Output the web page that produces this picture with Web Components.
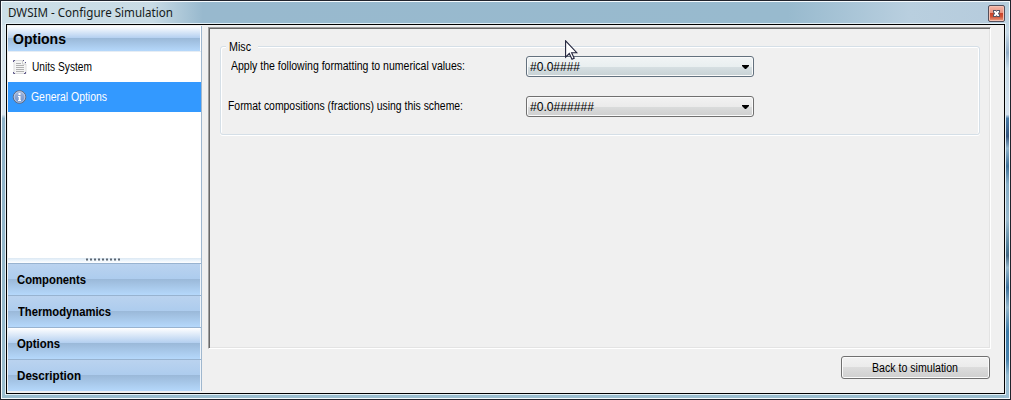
<!DOCTYPE html>
<html lang="en"><head><meta charset="utf-8"><title>DWSIM - Configure Simulation</title>
<style>html,body{margin:0;width:1011px;height:400px;overflow:hidden;font:12px "Liberation Sans",Arial,sans-serif;color:#000}</style></head>
<body><config-window></config-window>
<script>
function define(name, html, setup) {
  customElements.define(name, class extends HTMLElement {
    connectedCallback() {
      if (this.shadowRoot) return;
      const t = document.createElement('template');
      t.innerHTML = html;
      this.attachShadow({mode: 'open'}).append(t.content.cloneNode(true));
      if (setup) setup(this, this.shadowRoot);
    }
  });
}
/* Single-line label condensed or widened to a fixed measure. */
define('fit-label', `<style>:host{display:block;white-space:nowrap;flex:none;line-height:15px;height:15px}span{display:inline-block;transform-origin:0 50%}</style><span><slot></slot></span>`, (el, root) => {
  const s = root.querySelector('span'), w = +el.getAttribute('w');
  el.style.width = w + 'px';
  s.style.transform = `scaleX(${w / s.getBoundingClientRect().width})`;
});
define('close-button', `<style>:host{display:block;box-sizing:border-box;width:17px;height:17px;border:1px solid #534f5b;border-radius:2px;background:linear-gradient(#f4b7a9 0,#e99380 45%,#c9432a 48%,#cf5237 70%,#eba184 100%);box-shadow:inset 0 0 0 1px #f5c1b3}svg{display:block}</style>
<svg width="15" height="15" viewBox="0 0 15 15"><path d="M4 4h3l.5 1L8 4h3v2.3L10 7.5l1 1.2V11H8l-.5-1-.5 1H4V8.7l1-1.2-1-1.2z" fill="#535666"/><path d="M5 5h1.7l.8 1 .8-1H10v1L8.9 7.5 10 9v1H8.3l-.8-1-.8 1H5V9l1.1-1.5L5 6z" fill="#fff"/></svg>`);
define('side-item', `<style>:host{display:flex;height:30px;box-sizing:border-box;padding:0 0 0 4px;align-items:center;background:#fff}:host([selected]){background:#3399ff;color:#fff}slot[name=icon]{display:block;width:16px;height:16px;flex:none}.t{display:block;margin-left:4px}:host([selected]) .t{margin-left:3px}</style><slot name="icon"></slot><div class="t"><slot></slot></div>`);
define('nav-button', `<style>:host{display:flex;box-sizing:border-box;height:32px;border-top:1px solid #98b3d0;padding:2px 0 0 9px;align-items:center;font-weight:bold;background:linear-gradient(#bad3ef 0,#adccee 48%,#9ab8d8 48%,#b5d8fb 100%) 0 0/192px 100% no-repeat,#eef4fa}:host([active]){background:linear-gradient(#fff 0,#b3cff0 48%,#9ab8d8 48%,#b5d8fb 100%) 0 0/192px 100% no-repeat,#eef4fa}</style><slot></slot>`);
define('side-bar', `<style>
:host{display:flex;flex-direction:column;box-sizing:border-box;width:194px;height:365px;margin:1px 0 0 1px;border-right:1px solid #9fb7ce;background:#fff;flex:none}
header{height:25px;flex:none;display:flex;align-items:center;box-sizing:border-box;padding:0 0 1px 5px;font-size:15px;font-weight:bold;background:linear-gradient(#fff 0,#b3cff0 48%,#9ab8d8 48%,#b5d8fb 100%) 0 0/192px 100% no-repeat}
.list{flex:1;border-top:1px solid #e6edf4}.grip{height:5px;flex:none;background:linear-gradient(#dce8f2,#e8f2fb 40%,#fff);display:flex;justify-content:center;padding-right:3px}
svg{display:block}</style>
<header><fit-label w="53">Options</fit-label></header>
<div class="list">
<side-item><svg slot="icon" width="16" height="16" viewBox="0 0 16 16"><path d="M2 1.5h8.5L14 5v9.5H2z" fill="#f5f5f5" stroke="#ddd"/><path d="M10.5 1.5V5H14" fill="#fff" stroke="#ccc"/><path d="M4 4.5h5M4 6.5h8M4 8.5h8M4 10.5h8M4 12.5h8" stroke="#b1b1b1"/><path d="M1.5 3V1.5H3M11 1.5h1M13.5 3v1M1.5 13v1.5H3M12 14.5h1.5V13" fill="none" stroke="#5c5689"/></svg><fit-label w="60">Units System</fit-label></side-item>
<side-item selected><svg slot="icon" width="16" height="16" viewBox="0 0 16 16"><defs><linearGradient id="g" x2="0" y2="1"><stop stop-color="#a4b8dc"/><stop offset="1" stop-color="#6c8fca"/></linearGradient></defs><circle cx="7.5" cy="8" r="6.3" fill="url(#g)" stroke="#5f6b82"/><circle cx="7.5" cy="8" r="5.3" fill="none" stroke="#c1cee4" stroke-width=".8"/><path d="M6.5 4h2v2h-2zM6 7h2.5v4H9v1H6v-1h.7V8H6z" fill="#fff"/></svg><fit-label w="76">General Options</fit-label></side-item>
</div>
<div class="grip"><svg width="36" height="5"><path d="M1 1.5h35" stroke="#5f6873" stroke-width="2" stroke-dasharray="2 2"/><path d="M0 2.5h36" stroke="#fff" stroke-dasharray="1 3"/></svg></div>
<nav-button><fit-label w="69">Components</fit-label></nav-button>
<nav-button style="padding-left:10px"><fit-label w="93">Thermodynamics</fit-label></nav-button>
<nav-button active><fit-label w="43">Options</fit-label></nav-button>
<nav-button><fit-label w="64">Description</fit-label></nav-button>`);
define('combo-box', `<style>:host{display:flex;box-sizing:border-box;width:228px;height:21px;border:1px solid #707070;border-radius:3px;padding:1px 4px 0 3px;align-items:center;justify-content:space-between;background:linear-gradient(#f2f2f2 0,#ebebeb 50%,#dadcdc 52%,#cfcfcf 100%);box-shadow:inset 0 0 0 1px #fafafa;flex:none}:host([hot]){border-color:#63717e;background:linear-gradient(#f1f4f5,#e9eff0 50%,#d6dfe2 52%,#c7d1d4)}svg{display:block}</style><slot></slot><svg width="7" height="4"><path d="M0 0h7v1L4 4H3L0 1z"/></svg>`);
define('group-box', `<style>:host{display:block;box-sizing:border-box;width:760px;height:89px;border:1px solid #d5dfe7;border-radius:3px;box-shadow:inset 1px 1px #fff,inset -1px 0 #fff,0 1px #fff}
.legend{width:29px;height:15px;background:#f0f0f0;margin:-7px 0 1px 5px;padding-left:3px}.row{display:flex;height:21px}.row+.row{margin-top:19px}.l{width:298px;padding:3px 0 0 7px;flex:none}.a{padding-left:10px;width:295px}</style>
<div class="legend"><fit-label w="22">Misc</fit-label></div>
<div class="row"><div class="l a"><fit-label w="234">Apply the following formatting to numerical values:</fit-label></div><combo-box hot><fit-label w="50">#0.0####</fit-label></combo-box></div>
<div class="row"><div class="l"><fit-label w="235">Format compositions (fractions) using this scheme:</fit-label></div><combo-box><fit-label w="64">#0.0######</fit-label></combo-box></div>`);
define('push-button', `<style>:host{display:flex;box-sizing:border-box;width:149px;height:23px;border:1px solid #707070;border-radius:3px;padding:2px 2px 0 0;align-items:center;justify-content:center;background:linear-gradient(#f2f2f2,#ebebeb 48%,#dcdcdc 50%,#cfcfcf);box-shadow:inset 0 0 0 1px #fbfbfb}</style><slot></slot>`);
define('config-window', `<style>
:host{display:flex;flex-direction:column;position:relative;box-sizing:border-box;width:1011px;height:400px;border:1px solid #20232c;box-shadow:inset 0 0 0 1px #f5fafd;padding:1px 4px 4px;
background:linear-gradient(#b4cddc 0,#c7d9e7 8%,#91abc5 13%,#c8d9e6 17%,#d4e1ee 28.5%,#487aa6 29.5%,#35557e 34%,#8fb2ca 37%,#3f7199 41.5%,#86adc6 46%,#9abace 55%,#4d7b96 62%,#446884 64%,#94b6cb 67%,#3d719c 72%,#94b6cb 77%,#3d7ba8 83%,#4681ac 90%,#93b9cf 94%,#9dbfd2) 100% 0/6px 100% no-repeat,
linear-gradient(90deg,#cddfe8 0,#c8dbe5 15%,#98b9ce 20%,#98bace 78%,#b9cfdf 90%,#b5cbdc 100%) 0 0/100% 24px no-repeat,
linear-gradient(#d2e2ea 0,#dde7ee 28.5%,#8fb3c9 29.5%,#9abdce)}
.title{display:flex;justify-content:space-between;height:22px;flex:none;box-sizing:border-box;padding:3px 2px 0 3px;font:12px "Noto Sans",sans-serif;color:#151b20}
.title fit-label{margin-top:0}
.client{display:flex;box-sizing:border-box;width:999px;height:370px;border:1px solid #000;background:#f0f0f0;box-shadow:0 0 0 1px #e4f0f6;margin-left:1px}
.main{display:flex;flex-direction:column;padding:2px 0 0 6px}
.panel{box-sizing:border-box;width:783px;height:322px;border:1px solid #fff;border-top-color:#a0a0a0;border-left-color:#a0a0a0;box-shadow:inset 1px 1px #696969,inset -1px -1px #e3e3e3;padding:18px 0 0 11px}
push-button{margin:7px 0 0 633px}.pointer{position:absolute;left:564px;top:39px}</style>
<div class="title"><fit-label w="165">DWSIM - Configure Simulation</fit-label><close-button style="margin:0 -1px"></close-button></div>
<div class="client"><side-bar></side-bar><div class="main"><div class="panel"><group-box></group-box></div><push-button><fit-label w="86">Back to simulation</fit-label></push-button></div></div>
<svg class="pointer" width="13" height="21" viewBox="0 0 13 21"><path d="M.6.8v16.3l3.7-3.6 2.7 5.8 2.2-1-2.6-5.6h5.2z" fill="#fff" stroke="#20223a" stroke-width="1.1"/></svg>`);
</script></body></html>
